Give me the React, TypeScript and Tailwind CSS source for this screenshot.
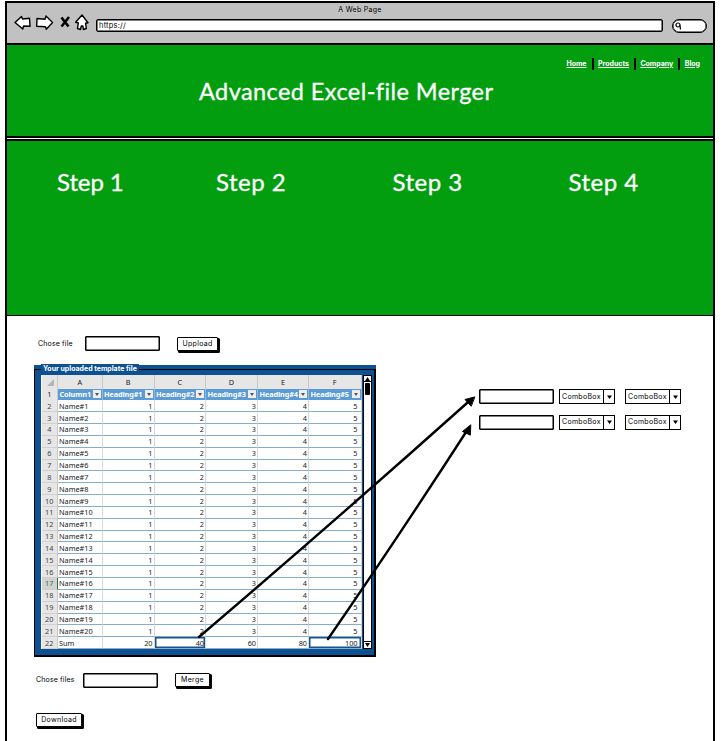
import React from "react";

const ui = "font-['Lato','Liberation_Sans',sans-serif]";
const face = "font-['Inter','Liberation_Sans',sans-serif] leading-[10px] whitespace-nowrap";
const small = `${face} text-[7px] tracking-[0.3px]`;
const bold = `${face} text-[7px] font-bold`;

const gridCols = "grid-cols-[16.5px_44.5px_52px_51.5px_52px_51px_52.5px]";
const headings = ["Column1", "Heading#1", "Heading#2", "Heading#3", "Heading#4", "Heading#5"];
const letters = ["A", "B", "C", "D", "E", "F"];
const sums = ["20", "40", "60", "80", "100"];

function NavIcons() {
  return (
    <svg width="72" height="20" viewBox="0 0 72 20" fill="white" stroke="black" strokeWidth="1.4" strokeLinejoin="round" className="overflow-visible">
      <path d="M1 9.500 L7.500 3.500 L8.500 6 L15.500 5.200 L16 13.300 L9.500 13 L8.800 16 Z" />
      <path d="M38.500 9.500 L32 3 L31 6.200 L23 5.500 L22.700 13.300 L31.500 13.700 L32.300 16.300 Z" />
      <path d="M47.500 4.500 L54.500 13.500 M55 4 L47.500 13.500" strokeWidth="2.600" fill="none" />
      <path d="M68 2 L61.700 9.300 L64.300 10 L63.500 15.500 L66.500 16.500 L67.300 13 L68.800 13 L69.500 16.500 L72.300 15.500 L71.600 10.200 L74 9.700 Z" />
    </svg>
  );
}

function Button({ label, className }: { label: string; className: string }) {
  return (
    <button className={`${small} flex items-center justify-center rounded-[1px] border border-black bg-white shadow-[1.5px_1.5px_0_0.5px_#000] ${className}`}>
      {label}
    </button>
  );
}

function TextBox() {
  return <div className="h-[15px] w-[75px] rounded-[1px] border border-black bg-white shadow-[inset_0_0_0_0.5px_#000]" />;
}

function Combo() {
  return (
    <div className="flex h-[15px] w-[56px] border border-black">
      <span className={`${small} flex flex-1 items-center pl-[2px]`}>ComboBox</span>
      <span className="flex w-[11px] items-center justify-center border-l border-black">
        <svg width="5" height="4" viewBox="0 0 5 4"><path d="M0 .5h5L2.500 4z" /></svg>
      </span>
    </div>
  );
}

function Sheet() {
  return (
    <div className="h-[274px] w-[321px] overflow-hidden bg-white pl-[0.5px] font-['Noto_Sans',sans-serif] text-[7.3px] leading-[10px] text-[#222]">
      <div className={`grid h-[13.5px] bg-[#e6e6e6] ${gridCols}`}>
        <div className="flex items-end justify-end border-r border-[#c8c8c8] pb-[3px] pr-[3px]">
          <svg width="7" height="7"><path d="M7 0v7H0z" fill="#b5b5b5" /></svg>
        </div>
        {letters.map((l) => (
          <div key={l} className="flex items-center justify-center border-r border-[#c8c8c8]">{l}</div>
        ))}
      </div>
      <div className={`grid h-[11.85px] ${gridCols}`}>
        <div className="flex items-center justify-center border-r border-[#c8c8c8] bg-[#e6e6e6]">1</div>
        {headings.map((h) => (
          <div key={h} className="flex min-w-0 items-center justify-between border-r border-[#8db9df] bg-[#5b9bd5] pl-[1.5px] pr-[1px] font-bold text-white">
            <span className="tracking-[-0.1px]">{h}</span>
            <span className="flex h-[8px] w-[8px] shrink-0 items-center justify-center bg-[#eeeeee]">
              <svg width="4" height="3"><path d="M0 0h4L2 3z" fill="#555" /></svg>
            </span>
          </div>
        ))}
      </div>
      {Array.from({ length: 21 }, (_, i) => {
        const sum = i === 20;
        const values = sum ? sums : ["1", "2", "3", "4", "5"];
        return (
          <div key={i} className={`grid h-[11.85px] ${gridCols}`}>
            <div className={`flex items-center justify-center border-b border-r border-b-[#d0d0d0] ${i === 15 ? "border-r-[#217346] bg-[#d3d3d3] text-[#217346]" : "border-r-[#c8c8c8] bg-[#e6e6e6] text-[#444]"}`}>{i + 2}</div>
            <div className="flex items-center border-b border-r border-b-[#86aecb] border-r-[#d5d9dc] pl-[1px]">{sum ? "Sum" : `Name#${i + 1}`}</div>
            {values.map((v, c) => (
              <div key={c} className={`flex items-center justify-end border-b border-r border-b-[#86aecb] border-r-[#d5d9dc] ${c === 4 ? "pr-[3px]" : "pr-[1px]"} ${sum && (c === 1 || c === 4) ? "shadow-[inset_0_0_0_1.5px_#16538f]" : ""}`}>{v}</div>
            ))}
          </div>
        );
      })}
    </div>
  );
}

function Scrollbar() {
  return (
    <div className="ml-[1px] flex h-[274px] w-[9px] flex-col items-center justify-between border border-black bg-white">
      <div className="flex w-full flex-col items-center">
        <div className="flex h-[6px] w-full items-center justify-center border-b border-black">
          <svg width="5" height="4"><path d="M0 4h5L2.500 0z" /></svg>
        </div>
        <div className="mt-[1px] h-[12px] w-[5px] rounded-[1px] bg-black" />
      </div>
      <div className="flex h-[7px] w-full items-center justify-center border-t border-black">
        <svg width="5" height="4"><path d="M0 0h5L2.500 4z" /></svg>
      </div>
    </div>
  );
}

const steps = [
  { label: "Step 1", place: "ml-[50px] w-[159px] tracking-[-0.1px]" },
  { label: "Step 2", place: "w-[176.5px]" },
  { label: "Step 3", place: "w-[176px]" },
  { label: "Step 4", place: "" },
];

export default function App() {
  return (
    <div className={`relative h-[741px] w-[723px] overflow-hidden bg-white pl-[5px] pt-[1px] text-black ${ui}`}>
      <div className="flex h-[745px] w-[710px] flex-col border-2 border-black">
        <header className="h-[42px] shrink-0 border-b-2 border-black bg-[#c1c1c1]">
          <div className={`${small} h-[10px] pt-[2px] text-center`}>A Web Page</div>
          <div className="flex items-center pl-[7px]">
            <NavIcons />
            <div className={`${face} ml-[10px] mt-[5px] flex h-[13px] w-[567px] items-center rounded-[2px] border border-black bg-white pl-[2px] text-[7.5px] tracking-[0.2px] shadow-[inset_0_0_0_0.5px_#000]`}>https://</div>
            <div className="ml-[9px] mt-[5px] flex h-[14px] w-[35px] items-center rounded-[10px] border border-black bg-white pl-[2px] shadow-[inset_0_0_0_0.5px_#000]">
              <svg width="7" height="8" fill="none" stroke="black" strokeWidth="1.2"><circle cx="3" cy="3" r="2" /><path d="M5 3.500L5.500 7.500" /></svg>
            </div>
          </div>
        </header>
        <section className="h-[93px] shrink-0 border-b-2 border-black bg-[#029e0f] text-white">
          <nav className={`${bold} flex h-[37px] items-center justify-end pr-[13px]`}>
            <a className="underline">Home</a>
            <i className="ml-[5px] mr-[4.5px] h-[12px] w-[2px] bg-black" />
            <a className="underline">Products</a>
            <i className="ml-[5px] mr-[4.5px] h-[12px] w-[2px] bg-black" />
            <a className="underline">Company</a>
            <i className="ml-[5px] mr-[4.5px] h-[12px] w-[2px] bg-black" />
            <a className="underline">Blog</a>
          </nav>
          <h1 className="-mt-[6px] ml-[192px] whitespace-nowrap text-[23.5px] leading-[30px] tracking-[0.42px] [-webkit-text-stroke:0.3px_white]">Advanced Excel-file Merger</h1>
        </section>
        <section className="mt-[1px] flex h-[177px] shrink-0 border-b border-t-2 border-black bg-[#029e0f] pt-[26px] text-[24px] leading-[30px] tracking-[0.5px] text-white [-webkit-text-stroke:0.3px_white]">
          {steps.map((s) => (
            <h2 key={s.label} className={`whitespace-nowrap ${s.place}`}>{s.label}</h2>
          ))}
        </section>
        <main className="flex flex-1 pl-[27px] pt-[20px]">
          <div className="w-[342px] shrink-0">
            <div className="flex h-[15px] items-center">
              <span className={`${small} ml-[4px] w-[47px] tracking-[0.15px]`}>Chose file</span>
              <TextBox />
              <Button label="Uppload" className="ml-[17px] h-[14px] w-[41px]" />
            </div>
            <div className="mt-[14px] h-[292px] bg-[#0e5193] pt-[4px]">
              <div className="flex h-[288px] flex-col border border-b-2 border-r-2 border-black">
                <div className="h-[5px]">
                  <span className={`${bold} ml-[6px] block w-fit -translate-y-[6px] bg-[#0e5193] px-[2px] text-white`}>Your uploaded template file</span>
                </div>
                <div className="flex pl-[6px]">
                  <Sheet />
                  <Scrollbar />
                </div>
              </div>
            </div>
            <div className="mt-[15px] flex h-[16px] items-center">
              <span className={`${small} ml-[2px] w-[47px] tracking-[0.15px]`}>Chose files</span>
              <TextBox />
              <Button label="Merge" className="ml-[17px] h-[14px] w-[35px]" />
            </div>
            <Button label="Download" className="ml-[2px] mt-[25px] h-[14px] w-[46px]" />
          </div>
          <div className="ml-[103px] mt-[53px] flex flex-col gap-[10.5px]">
            {[0, 1].map((r) => (
              <div key={r} className="flex">
                <TextBox />
                <div className="ml-[5px]"><Combo /></div>
                <div className="ml-[10px]"><Combo /></div>
              </div>
            ))}
          </div>
        </main>
      </div>
      <svg className="pointer-events-none absolute left-0 top-0" width="723" height="741" fill="none" stroke="black" strokeWidth="2.4" strokeLinecap="round">
        <path d="M199 637 Q335 521 471 399.500" />
        <path d="M328 639 Q397 539 468 429" />
        <path d="M474.500 397 L465 399.500 L471 406 Z" fill="black" strokeWidth="1" />
        <path d="M470.500 425 L462.500 431.500 L470 435 Z" fill="black" strokeWidth="1" />
      </svg>
    </div>
  );
}
